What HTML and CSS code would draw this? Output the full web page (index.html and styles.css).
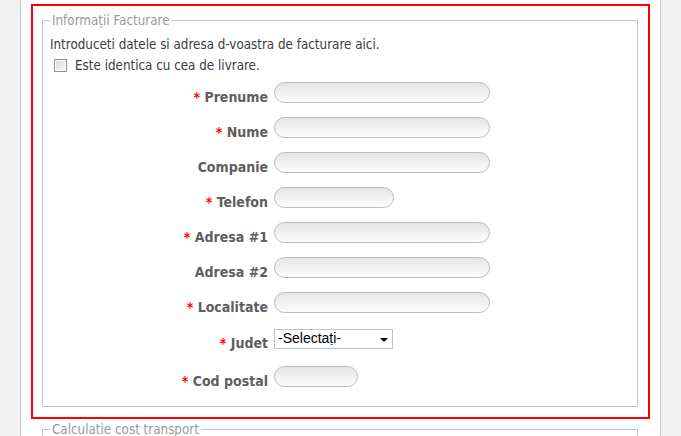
FILE: index.html
```html
<!DOCTYPE html>
<html>
<head>
    <title>Checkout - Facturare</title>
    <link rel="stylesheet" href="styles.css">
</head>
<body>
    <div class="page">
        <div class="billing-box">
            <fieldset class="box">
                <legend>Informații Facturare</legend>
                <p class="intro">Introduceti datele si adresa d-voastra de facturare aici.</p>
                <label class="same-row">
                    <input type="checkbox" class="check">
                    <span>Este identica cu cea de livrare.</span>
                </label>

                <div class="form-row">
                    <label class="field-label"><span class="req">*</span> Prenume</label>
                    <input type="text" class="field">
                </div>
                <div class="form-row">
                    <label class="field-label"><span class="req">*</span> Nume</label>
                    <input type="text" class="field">
                </div>
                <div class="form-row">
                    <label class="field-label">Companie</label>
                    <input type="text" class="field">
                </div>
                <div class="form-row">
                    <label class="field-label"><span class="req">*</span> Telefon</label>
                    <input type="text" class="field short">
                </div>
                <div class="form-row">
                    <label class="field-label"><span class="req">*</span> Adresa #1</label>
                    <input type="text" class="field">
                </div>
                <div class="form-row">
                    <label class="field-label">Adresa #2</label>
                    <input type="text" class="field">
                </div>
                <div class="form-row">
                    <label class="field-label"><span class="req">*</span> Localitate</label>
                    <input type="text" class="field">
                </div>
                <div class="form-row select-row">
                    <label class="field-label"><span class="req">*</span> Judet</label>
                    <span class="select-wrap">
                        <select class="county">
                            <option>-Selectați-</option>
                        </select>
                    </span>
                </div>
                <div class="form-row zip-row">
                    <label class="field-label"><span class="req">*</span> Cod postal</label>
                    <input type="text" class="field zip">
                </div>
            </fieldset>
        </div>

        <fieldset class="box shipping">
            <legend>Calculatie cost transport</legend>
            <p class="intro">Alegeti modalitatea de transport.</p>
        </fieldset>
    </div>
</body>
</html>
```

FILE: styles.css
```css
html, body {
    margin: 0;
    padding: 0;
    background-color: #f1f1f1;
    height: 100%;
    overflow: hidden;
}
body {
    font-family: "DejaVu Sans Condensed", "DejaVu Sans", sans-serif;
    font-size: 13.3px;
    color: #3c3c3c;
}
.page {
    margin-left: 20px;
    width: 639px;
    min-height: 100%;
    background-color: #fff;
    border-left: 1px solid #c6c6c6;
    border-right: 1px solid #c6c6c6;
    padding-top: 4px;
}
.billing-box {
    margin: 0 10px;
    border: 2px solid #f00;
    padding: 7px 10px 10px 9px;
}
.box {
    margin: 0;
    border: 1px solid #c4c4c4;
    padding: 9px 7px 19px 7px;
}
.box legend {
    padding: 0 2px;
    color: #9a9a9a;
    line-height: 15px;
}
.intro {
    margin: 0;
    line-height: 15px;
}
.same-row {
    display: flex;
    align-items: center;
    margin-top: 6px;
    line-height: 15px;
}
.check {
    -webkit-appearance: none;
    appearance: none;
    width: 13px;
    height: 13px;
    margin: 0 8px 0 4px;
    border: 1px solid #929292;
    background: linear-gradient(135deg, #d9d9d9, #fafafa);
    box-shadow: inset 0 0 0 1px #fff;
}
.form-row {
    display: flex;
    align-items: flex-end;
    gap: 6px;
    margin-top: 14px;
}
.box > .form-row:first-of-type {
    margin-top: 9px;
}
.select-row {
    margin-top: 16px;
}
.zip-row {
    margin-top: 17px;
}
.field-label {
    width: 218px;
    text-align: right;
    font-weight: bold;
    font-size: 14px;
    line-height: 15px;
    margin-bottom: -2px;
    color: #5e5e5e;
}
.req {
    color: #f00;
}
.field {
    box-sizing: border-box;
    width: 216px;
    height: 21px;
    margin: 0;
    padding: 0 8px;
    border: 1px solid #bcbcbc;
    border-radius: 11px;
    background: linear-gradient(to bottom, #e4e4e4, #fdfdfd);
    outline: none;
}
.field.short {
    width: 120px;
}
.field.zip {
    width: 84px;
}
.select-wrap {
    position: relative;
    display: inline-block;
}
.county {
    -webkit-appearance: none;
    appearance: none;
    box-sizing: border-box;
    width: 119px;
    height: 20px;
    margin: 0;
    padding: 0 0 3px 3px;
    border: 1px solid #b9c3cf;
    border-radius: 0;
    background: #fff;
    font-family: "Liberation Sans", Arial, sans-serif;
    font-size: 14px;
    color: #000;
    display: block;
}
.select-wrap::after {
    content: "";
    position: absolute;
    right: 5px;
    top: 9px;
    border-left: 4px solid transparent;
    border-right: 4px solid transparent;
    border-top: 4px solid #000;
    pointer-events: none;
}
.shipping {
    margin: 3px 22px 0 21px;
}
```
